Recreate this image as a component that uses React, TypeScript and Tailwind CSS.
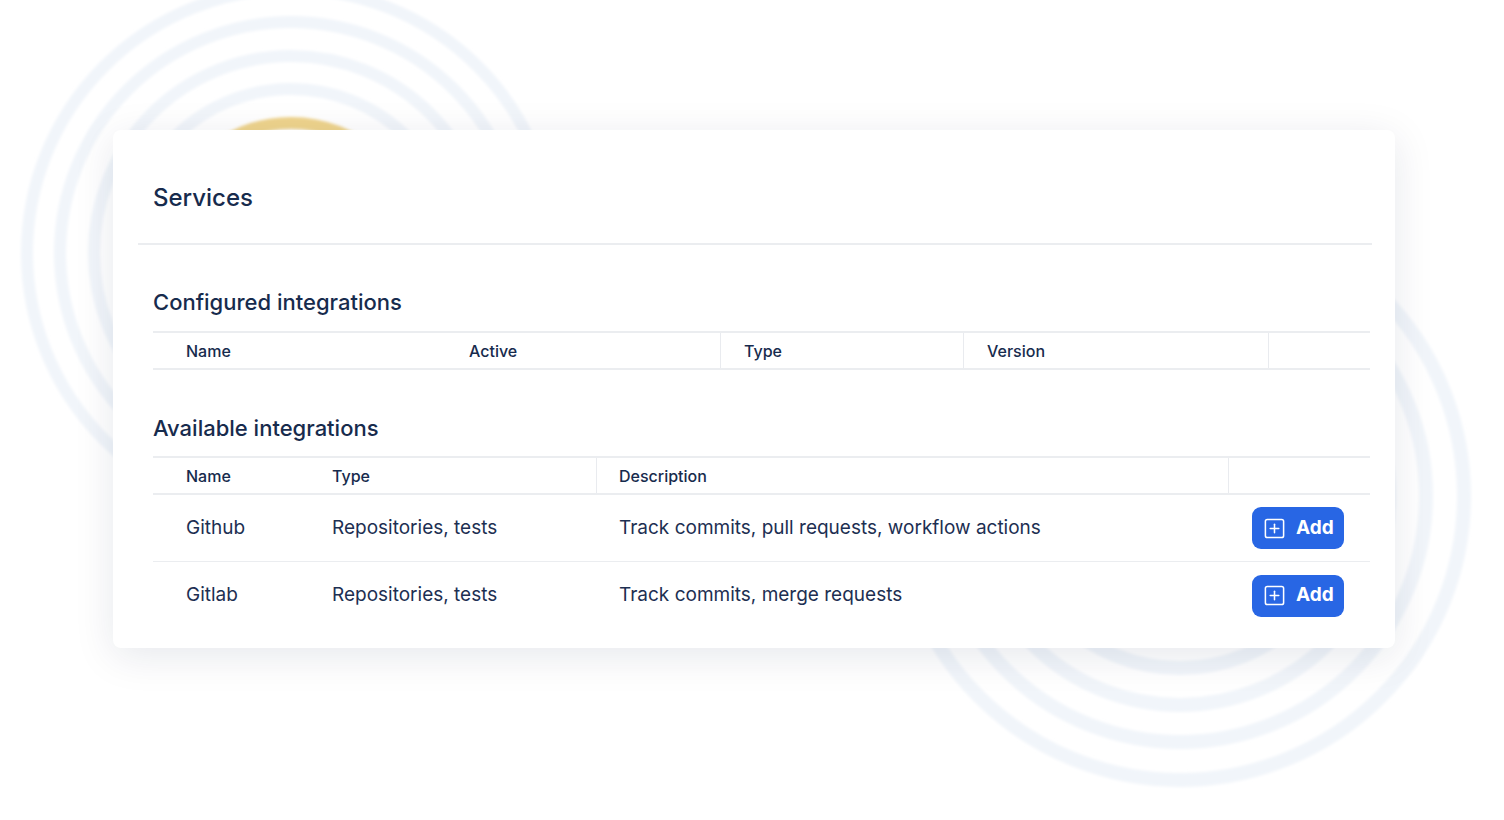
import React from "react";

function PlusSquare() {
  return (
    <svg width="23" height="23" viewBox="0 0 24 24" fill="none" stroke="white" strokeWidth="1.6" strokeLinecap="round" strokeLinejoin="round">
      <rect x="2.5" y="2.5" width="19" height="19" rx="2" />
      <path d="M12 7.5v9" />
      <path d="M7.5 12h9" />
    </svg>
  );
}

function Rings() {
  const left = [264, 231, 197, 164];
  const right = [284, 246, 209, 172];
  return (
    <svg className="absolute inset-0 pointer-events-none" width="1504" height="820" viewBox="0 0 1504 820">
      <defs>
        <filter id="soft" x="-10%" y="-10%" width="120%" height="120%">
          <feGaussianBlur stdDeviation="1.8" />
        </filter>
      </defs>
      <g filter="url(#soft)" fill="none">
        {left.map((r) => (
          <circle key={`l${r}`} cx="291" cy="253" r={r} stroke="#f1f5fa" strokeWidth="12" />
        ))}
        <circle cx="291" cy="253" r="130" stroke="#efd48c" strokeWidth="12" />
        {right.map((r) => (
          <circle key={`r${r}`} cx="1180" cy="496" r={r} stroke="#f1f5fa" strokeWidth="14" />
        ))}
      </g>
    </svg>
  );
}

function AddButton() {
  return (
    <button className="flex items-center gap-[10px] h-[42px] w-[92px] pl-[11px] rounded-[9px] bg-[#2866e4] text-white text-[19px] font-bold">
      <PlusSquare />
      <span>Add</span>
    </button>
  );
}

export default function App() {
  const available = [
    { name: "Github", type: "Repositories, tests", desc: "Track commits, pull requests, workflow actions" },
    { name: "Gitlab", type: "Repositories, tests", desc: "Track commits, merge requests" },
  ];

  return (
    <div className="relative h-[820px] w-[1504px] overflow-hidden bg-white font-['Inter','Noto_Sans',sans-serif] text-[#172b4d]">
      <Rings />
      <div className="relative ml-[113px] mt-[130px] w-[1282px] rounded-[8px] bg-white pb-[19px] shadow-[0_8px_40px_rgba(9,30,66,0.10)]">
        <div className="pl-[40px] pt-[52px]">
          <h1 className="text-[24px] leading-[32px] font-medium">Services</h1>
        </div>
        <div className="ml-[25px] mr-[23px] mt-[29px] h-[2px] bg-[#ebedf0]" />

        <div className="pl-[40px] pr-[25px]">
          <h2 className="mt-[43px] text-[22px] leading-[28px] font-medium">Configured integrations</h2>
          <div className="mt-[15px] flex h-[39px] items-center border-y-2 border-[#ebedf0] text-[16px] font-medium">
            <div className="w-[294px] pl-[33px]">Name</div>
            <div className="w-[274px] h-full flex items-center pl-[22px] border-r border-[#e9ebef]">Active</div>
            <div className="w-[243px] h-full flex items-center pl-[23px] border-r border-[#e9ebef]">Type</div>
            <div className="w-[305px] h-full flex items-center pl-[23px] border-r border-[#e9ebef]">Version</div>
            <div className="flex-1" />
          </div>

          <h2 className="mt-[44px] text-[22px] leading-[28px] font-medium">Available integrations</h2>
          <div className="mt-[14px] flex h-[39px] items-center border-y-2 border-[#ebedf0] text-[16px] font-medium">
            <div className="w-[157px] pl-[33px]">Name</div>
            <div className="w-[287px] h-full flex items-center pl-[22px] border-r border-[#e9ebef]">Type</div>
            <div className="w-[632px] h-full flex items-center pl-[22px] border-r border-[#e9ebef]">Description</div>
            <div className="flex-1" />
          </div>
          {available.map((row, i) => (
            <div
              key={row.name}
              className={`flex h-[67px] items-center text-[19px] text-[#1d2f52] ${i === 0 ? "border-b border-[#ebedf0]" : ""}`}
            >
              <div className="w-[157px] pl-[33px]">{row.name}</div>
              <div className="w-[287px] pl-[22px]">{row.type}</div>
              <div className="w-[632px] pl-[22px]">{row.desc}</div>
              <div className="flex flex-1 justify-end pr-[26px]">
                <AddButton />
              </div>
            </div>
          ))}
        </div>
      </div>
    </div>
  );
}
